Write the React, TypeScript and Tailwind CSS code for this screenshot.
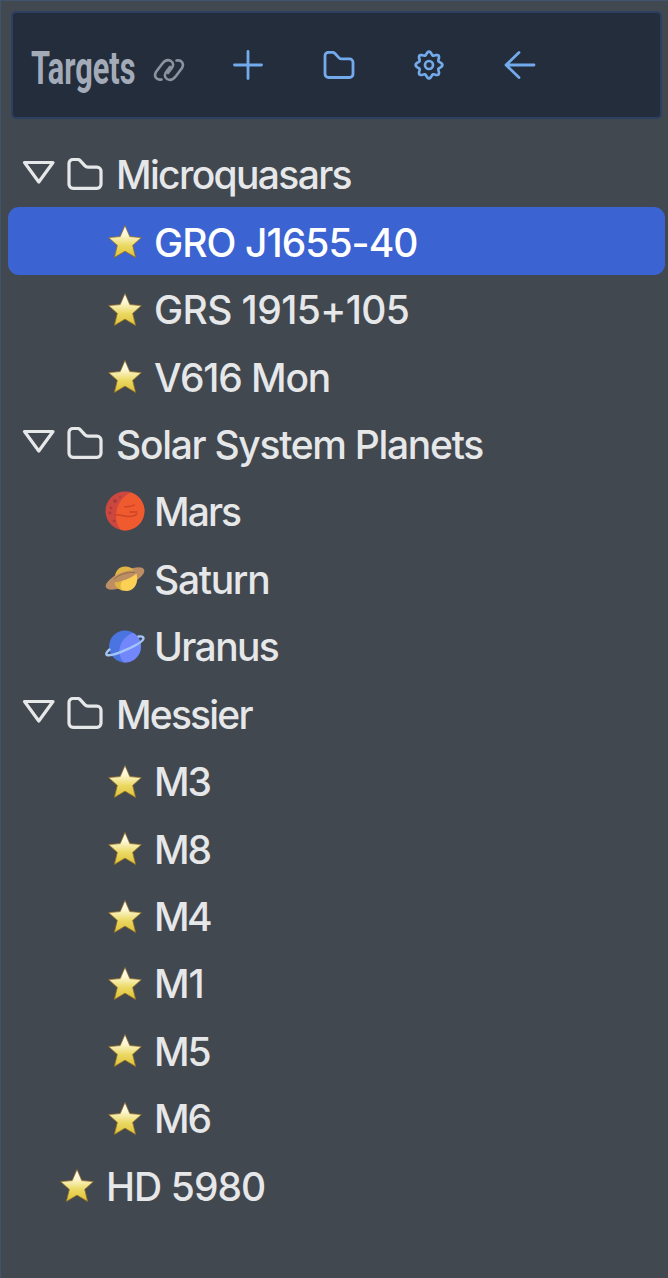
import React from 'react';

type Kind = 'star' | 'mars' | 'saturn' | 'uranus';
type Row = { label: string; kind: 'group' | Kind; root?: boolean; selected?: boolean; tracking: string };

const rows: Row[] = [
  { label: 'Microquasars', kind: 'group', tracking: 'tracking-[-1.65px]' },
  { label: 'GRO J1655-40', kind: 'star', selected: true, tracking: 'tracking-[-0.95px]' },
  { label: 'GRS 1915+105', kind: 'star', tracking: 'tracking-[-0.6px]' },
  { label: 'V616 Mon', kind: 'star', tracking: 'tracking-[-1.15px]' },
  { label: 'Solar System Planets', kind: 'group', tracking: 'tracking-[-1.3px]' },
  { label: 'Mars', kind: 'mars', tracking: 'tracking-[-1.9px]' },
  { label: 'Saturn', kind: 'saturn', tracking: 'tracking-[-1.3px]' },
  { label: 'Uranus', kind: 'uranus', tracking: 'tracking-[-1.6px]' },
  { label: 'Messier', kind: 'group', tracking: 'tracking-[-1.8px]' },
  { label: 'M3', kind: 'star', tracking: 'tracking-[-2.2px]' },
  { label: 'M8', kind: 'star', tracking: 'tracking-[-2.2px]' },
  { label: 'M4', kind: 'star', tracking: 'tracking-[-2.6px]' },
  { label: 'M1', kind: 'star', tracking: 'tracking-[-1.2px]' },
  { label: 'M5', kind: 'star', tracking: 'tracking-[-2.2px]' },
  { label: 'M6', kind: 'star', tracking: 'tracking-[-2.2px]' },
  { label: 'HD 5980', kind: 'star', root: true, tracking: 'tracking-[-0.95px]' },
];

// Outline of an eight-lobed cog centred in a 30 unit box.
const cogOutline =
  'M' +
  Array.from({ length: 96 }, (_, i) => {
    const a = (i / 96) * Math.PI * 2;
    const r = 11.8 + 1.6 * Math.cos(8 * a);
    return `${(15 + r * Math.sin(a)).toFixed(2)} ${(15 - r * Math.cos(a)).toFixed(2)}`;
  }).join('L') +
  'Z';

function Folder({ className }: { className: string }) {
  return (
    <svg viewBox="0 0 36 32" className={className} fill="none" stroke="currentColor" strokeWidth="3.2" strokeLinejoin="round">
      <path d="M2 5.5a4 4 0 0 1 4-4h4.4a4 4 0 0 1 3 1.3l4.6 5a4 4 0 0 0 3 1.3H30a4 4 0 0 1 4 4v13.2a4 4 0 0 1-4 4H6a4 4 0 0 1-4-4Z" />
    </svg>
  );
}

function Star() {
  return (
    <svg viewBox="0 0 40 40" className="size-10 shrink-0">
      <defs>
        <linearGradient id="gold" x1="0" y1="0" x2="0" y2="1">
          <stop offset="0" stopColor="#ffffff" />
          <stop offset=".3" stopColor="#fcf6d0" />
          <stop offset=".62" stopColor="#ebd964" />
          <stop offset="1" stopColor="#dcc136" />
        </linearGradient>
      </defs>
      <path
        d="M20 4.5 24.8 15.6 36.4 16.6 27.7 24.400 30.700 36.600 20 30.200 9.300 36.600 12.300 24.400 3.600 16.600 15.200 15.600Z"
        fill="url(#gold)"
        stroke="#8f6b25"
        strokeWidth=".8"
        strokeLinejoin="round"
      />
    </svg>
  );
}

function Mars() {
  return (
    <svg viewBox="0 0 40 40" className="size-10 shrink-0">
      <circle cx="20" cy="20" r="19.5" fill="#cb4740" />
      <path d="M26 1.45A19.5 19.5 0 0 1 16 39.08C9 31 10 19 15 11 18 6 22 3 26 1.45Z" fill="#ef5a2e" />
      <g fill="#a83b38">
        <circle cx="10" cy="10" r="2" />
        <circle cx="6" cy="17" r="1.3" />
        <circle cx="5" cy="22" r="1.4" />
        <circle cx="9" cy="30" r="1.3" />
        <circle cx="15" cy="6" r="1" />
      </g>
      <g fill="none" stroke="#d04328" strokeWidth="1.5" strokeLinecap="round">
        <path d="M10 24c8-1 9 3 18 1 2-.5 3-1 4-2" />
        <path d="M20 16c4-1 6 0 9-2M25 21h7" />
      </g>
    </svg>
  );
}

function Saturn() {
  return (
    <svg viewBox="0 0 40 40" className="size-10 shrink-0">
      <ellipse cx="20" cy="20.5" rx="21" ry="7.5" fill="#bd8d63" transform="rotate(-25 20 20.5)" />
      <path d="M9.500 25C15 24 26 20.500 31.500 15.500 34 24 30 32.500 22 33 15 33 11 29.500 9.500 25Z" fill="#fccf55" />
      <path d="M9.500 25C14 24 18 22.500 18 22.500 14.500 26 15 30 18 32.500 14 31.500 11 29 9.500 25Z" fill="#dfb33f" />
      <path d="M10 18.500C15 14.500 22 12 29 12.500 27 10 24 8.500 20 8.500 14.500 8.500 10.500 12.500 10 18.500Z" fill="#e1b546" />
      <path d="M9 21.500c4-4.500 12-7.500 21-7" fill="none" stroke="#946d48" strokeWidth="1" />
    </svg>
  );
}

function Uranus() {
  return (
    <svg viewBox="0 0 40 40" className="size-10 shrink-0">
      <circle cx="20" cy="20.5" r="16" fill="#4a74df" />
      <path d="M28 6.640A16 16 0 0 1 19 36.470C11 29 13 13 28 6.640Z" fill="#7187fb" />
      <path d="M33.500 10.500c3-.4 5 .2 5 1.700C38.500 17 8 31 2 29 .5 28.500 1.500 26 4.500 23.500" fill="none" stroke="#a4c4f6" strokeWidth="2.400" strokeLinecap="round" />
    </svg>
  );
}

const bodies: Record<Kind, () => React.JSX.Element> = { star: Star, mars: Mars, saturn: Saturn, uranus: Uranus };

function Label({ row }: { row: Row }) {
  return <span className={`pt-[2px] whitespace-nowrap ${row.tracking}`}>{row.label}</span>;
}

function TreeRow({ row }: { row: Row }) {
  if (row.kind === 'group') {
    return (
      <li className="flex h-[67.45px] items-center pl-[14px]">
        <svg viewBox="0 0 34 26" className="mr-[11px] mb-[2px] h-[26px] w-[34px] shrink-0" fill="none" stroke="currentColor" strokeWidth="3.2" strokeLinejoin="round">
          <path d="M2.5 2.5H31L16.8 22Z" />
        </svg>
        <Folder className="mr-[13px] h-8 w-9 shrink-0" />
        <Label row={row} />
      </li>
    );
  }
  const Body = bodies[row.kind];
  return (
    <li className={`flex h-[67.45px] items-center gap-[9px] rounded-[11px] ${row.root ? 'pl-[49px]' : 'pl-[97px]'} ${row.selected ? 'bg-[#3b63d2] text-white' : ''}`}>
      <Body />
      <Label row={row} />
    </li>
  );
}

export default function App() {
  return (
    <main className="h-[1278px] w-full overflow-hidden border-t border-l border-[#42546d] bg-[#42484f] pt-[10px] font-['Inter',sans-serif] font-medium text-[#e6e7e9]">
      <header className="ml-[10px] flex h-[108px] w-[651px] items-center rounded-[5px] border-2 border-[#2d4062] bg-[#232d3c] text-[#73aaeb]">
        <h1 className="ml-[18px] w-[122px] pt-[5px] text-[46px] leading-none font-bold text-[#a4abb8]">
          <span className="inline-block origin-left scale-x-[0.668] font-['Roboto',sans-serif]">Targets</span>
        </h1>
        <svg viewBox="0 0 32 24" className="mt-[10px] h-6 w-8 shrink-0 text-[#8c939f]" fill="none" stroke="currentColor" strokeWidth="2.6" strokeLinecap="round">
          <path d="M8.5 21.5C3.5 22.5 .5 18.5 3 14L9 6C12 2 15.5 1.5 18 3 21 5 20.5 8 18.5 10.5L15 15" />
          <path d="M23.5 2.5C28.5 1.5 31.5 5.5 29 10L23 18C20 22 16.5 22.5 14 21 11 19 11.500 16 13.500 13.500L17 9" />
        </svg>
        <svg viewBox="0 0 30 30" className="ml-[48px] size-[30px] shrink-0" fill="none" stroke="currentColor" strokeWidth="2.8" strokeLinecap="round">
          <path d="M15 1.5v27M1.5 15h27" />
        </svg>
        <Folder className="ml-[60px] h-7 w-[32px] shrink-0" />
        <svg viewBox="0 0 30 30" className="ml-[59px] size-[30px] shrink-0" fill="none" stroke="currentColor" strokeWidth="2.7" strokeLinejoin="round">
          <circle cx="15" cy="15" r="4" />
          <path d={cogOutline} />
        </svg>
        <svg viewBox="0 0 32 30" className="ml-[60px] h-[30px] w-8 shrink-0" fill="none" stroke="currentColor" strokeWidth="2.8" strokeLinecap="round" strokeLinejoin="round">
          <path d="M30 15H2M15 2.5 2 15 15 27.5" />
        </svg>
      </header>
      <ul className="mt-[21px] mr-[3px] ml-[7px] text-[39px] leading-none">
        {rows.map((row) => (
          <TreeRow key={row.label} row={row} />
        ))}
      </ul>
    </main>
  );
}
